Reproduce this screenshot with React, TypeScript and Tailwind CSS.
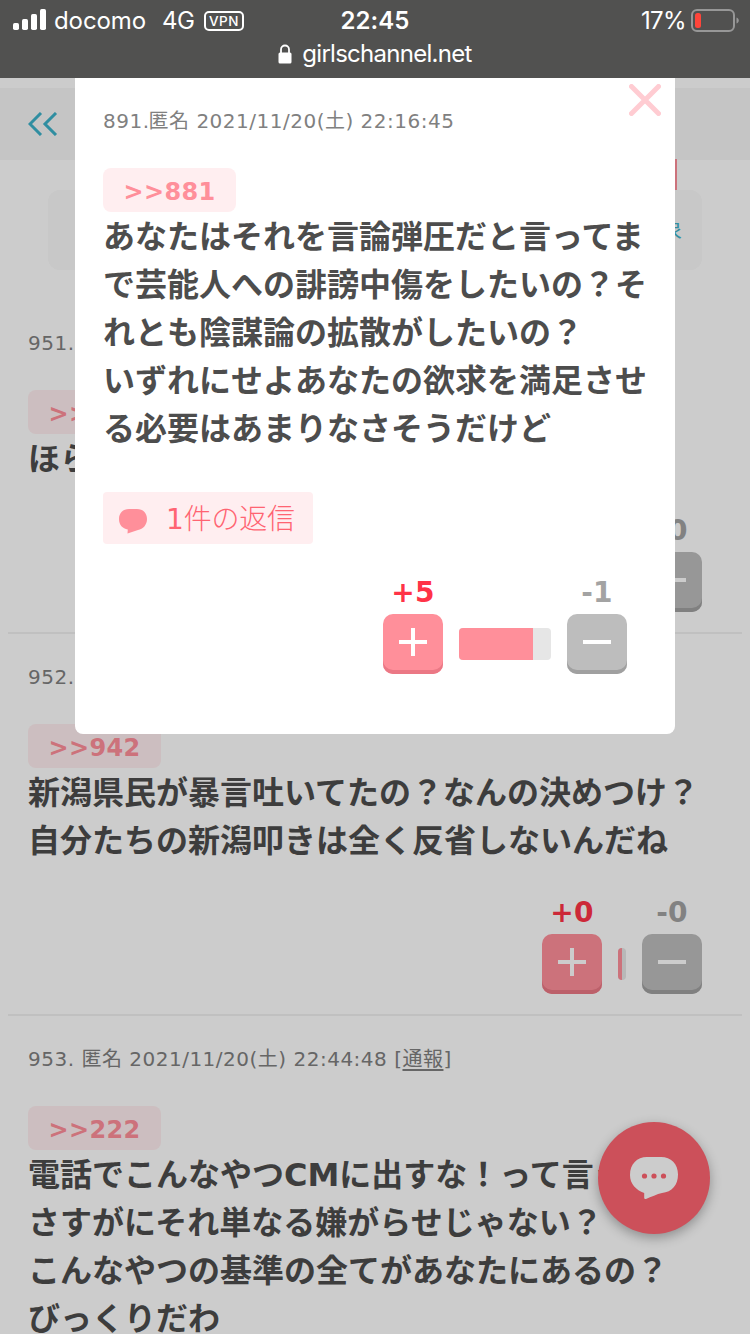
import React from 'react';

interface CommentData {
  id: number;
  meta: React.ReactNode;
  anchor: string;
  lines: string[];
  plus: string;
  minus: string;
  ratio: number;
}

const comments: CommentData[] = [
  {
    id: 951,
    meta: '951.',
    anchor: '>>942',
    lines: ['ほら'],
    plus: '+0',
    minus: '-0',
    ratio: 50,
  },
  {
    id: 952,
    meta: '952.',
    anchor: '>>942',
    lines: ['新潟県民が暴言吐いてたの？なんの決めつけ？', '自分たちの新潟叩きは全く反省しないんだね'],
    plus: '+0',
    minus: '-0',
    ratio: 50,
  },
  {
    id: 953,
    meta: (
      <>
        953. 匿名 2021/11/20(土) 22:44:48 [<span className="underline underline-offset-[3px]">通報</span>]
      </>
    ),
    anchor: '>>222',
    lines: ['電話でこんなやつCMに出すな！って言う', 'さすがにそれ単なる嫌がらせじゃない？', 'こんなやつの基準の全てがあなたにあるの？', 'びっくりだわ'],
    plus: '+0',
    minus: '-0',
    ratio: 50,
  },
];

const modalLines = [
  'あなたはそれを言論弾圧だと言ってま',
  'で芸能人への誹謗中傷をしたいの？そ',
  'れとも陰謀論の拡散がしたいの？',
  'いずれにせよあなたの欲求を満足させ',
  'る必要はあまりなさそうだけど',
];

const StatusBar: React.FC = () => (
  <header className="relative z-30 h-[78px] bg-[#515150] font-[Inter,sans-serif] text-white">
    <div className="grid h-10 grid-cols-[1fr_auto_1fr] items-center px-3 pt-px">
      <div className="flex items-center">
        <svg className="-mt-[3px]" width="34" height="22" viewBox="0 0 34 22" fill="white">
          <rect x="1" y="14" width="6" height="7" rx="1.7" />
          <rect x="10" y="10" width="6" height="11" rx="1.7" />
          <rect x="19" y="5" width="6" height="16" rx="1.7" />
          <rect x="28" y="0" width="6" height="21" rx="1.7" />
        </svg>
        <span className="ml-2 w-[90px] whitespace-nowrap text-[24px] leading-10 tracking-[-0.1px]">docomo</span>
        <span className="ml-[18px] w-8 text-[24px] leading-10 tracking-[-0.5px]">4G</span>
        <span className="ml-[10px] flex h-5 w-10 items-center justify-center rounded-[5px] border-2 border-white text-[13.5px] font-medium tracking-[0.6px]">VPN</span>
      </div>
      <span className="text-[24px] font-semibold leading-10 tracking-[0.1px]">22:45</span>
      <div className="-mr-px flex items-center justify-end">
        <span className="text-[24px] leading-10 tracking-[-0.6px]">17%</span>
        <svg className="ml-[5px] -mt-px" width="48" height="24" viewBox="0 0 48 24">
          <rect x="1" y="1" width="42" height="21" rx="5" fill="none" stroke="#979797" strokeWidth="2" />
          <rect x="4" y="4" width="6" height="15" rx="2.5" fill="#ff453a" />
          <path d="M45.5 8.5c3 1 3 5 0 6z" fill="#979797" />
        </svg>
      </div>
    </div>
    <div className="flex h-7 items-center justify-center gap-[10px]">
      <svg width="14" height="20" viewBox="0 0 14 20">
        <path d="M3 9V5.5a4 4 0 0 1 8 0V9" fill="none" stroke="white" strokeWidth="1.8" />
        <rect x="0.5" y="8.5" width="13" height="11" rx="1.5" fill="white" />
      </svg>
      <span className="text-[24px] leading-7 tracking-[-0.72px]">girlschannel.net</span>
    </div>
  </header>
);

const Anchor: React.FC<{ label: string }> = ({ label }) => (
  <div className="flex h-11 w-[133px] items-center justify-center rounded-lg bg-[#ffeef0] pt-[3px] text-[24px] font-bold tracking-[0.3px] text-[#ff8f9a]">
    {label}
  </div>
);

const Body: React.FC<{ lines: string[] }> = ({ lines }) => (
  <div className="pt-px text-[32px] font-bold leading-[48px] text-[#4d4d4d]">
    {lines.map((line) => (
      <p key={line} className="whitespace-nowrap">{line}</p>
    ))}
  </div>
);

interface VotesProps {
  plus: string;
  minus: string;
  ratio: number;
  wide?: boolean;
}

const Votes: React.FC<VotesProps> = ({ plus, minus, ratio, wide }) => (
  <div className="flex items-end justify-end gap-4">
    <div className="flex w-[60px] flex-col items-center">
      <span className="h-[39px] text-[28px] font-bold leading-9 tracking-[0.3px] text-[#ff3347]">{plus}</span>
      <button className="flex h-[60px] w-[60px] justify-center rounded-[10px] bg-[#ff8f9a] pt-[14px] shadow-[inset_0_-4px_0_#eb7885]">
        <svg width="28" height="28" viewBox="0 0 28 28" stroke="white" strokeWidth="4">
          <path d="M0 14h28M14 0v28" />
        </svg>
      </button>
    </div>
    <div className={`mb-[14px] flex h-8 overflow-hidden rounded bg-[#e6e6e6] ${wide ? 'w-[92px]' : 'w-2'}`}>
      <div className="bg-[#ff8f9a]" style={{ width: `${ratio}%` }} />
    </div>
    <div className="flex w-[60px] flex-col items-center">
      <span className="h-[39px] text-[28px] font-bold leading-9 tracking-[0.3px] text-[#a3a3a3]">{minus}</span>
      <button className="flex h-[60px] w-[60px] justify-center rounded-[10px] bg-[#bdbdbd] pt-[14px] shadow-[inset_0_-4px_0_#a0a0a0]">
        <svg width="28" height="28" viewBox="0 0 28 28" stroke="white" strokeWidth="4">
          <path d="M0 14h28" />
        </svg>
      </button>
    </div>
  </div>
);

const Comment: React.FC<{ comment: CommentData }> = ({ comment }) => (
  <article className="mx-2 border-b-2 border-[#f0f0f0] pb-5 pl-5 pr-10 pt-7">
    <p className="mb-8 whitespace-nowrap text-[20px] leading-[30px] tracking-[0.5px] text-[#808080]">{comment.meta}</p>
    <Anchor label={comment.anchor} />
    <Body lines={comment.lines} />
    <div className="mt-[30px]">
      <Votes plus={comment.plus} minus={comment.minus} ratio={comment.ratio} />
    </div>
  </article>
);

const Modal: React.FC = () => (
  <div className="absolute left-[75px] top-[78px] z-20 h-[656px] w-[600px] rounded-b-lg bg-white px-7 pt-7">
    <button className="absolute right-[14px] top-[6px]">
      <svg width="32" height="32" viewBox="0 0 32 32" stroke="#ffccd2" strokeWidth="5" strokeLinecap="round">
        <path d="M2.5 2.5l27 27M29.5 2.5l-27 27" />
      </svg>
    </button>
    <p className="mb-8 whitespace-nowrap text-[20px] leading-[30px] tracking-[0.5px] text-[#808080]">
      891.<span className="-ml-[1px]">匿名</span> 2021/11/20(土) 22:16:45
    </p>
    <Anchor label=">>881" />
    <Body lines={modalLines} />
    <button className="mt-[39px] flex h-[52px] w-[210px] items-center rounded bg-[#ffeef0] pl-4 text-[28px] text-[#ff6472]">
      <svg className="mt-[5px]" width="28" height="26" viewBox="0 0 28 26" fill="#ff8f9a">
        <path d="M10 1h8c6 0 10 4 10 10s-4 10-9 11l-10.500 3.500.300-4C3.500 20.500 0 17 0 11 0 5 4 1 10 1z" />
      </svg>
      <span className="ml-[19px] whitespace-nowrap pt-[3px] tracking-[-0.2px]">
        1<span className="font-light">件の返信</span>
      </span>
    </button>
    <div className="mt-[31px] pr-5">
      <Votes plus="+5" minus="-1" ratio={80.4} wide />
    </div>
  </div>
);

export default function App() {
  return (
    <div className="relative h-[1334px] w-[750px] overflow-hidden bg-white font-['DejaVu_Sans','Noto_Sans_CJK_JP',sans-serif]">
      <StatusBar />
      <nav className="mt-[10px] flex h-[72px] items-center bg-[#f7f7f7] pl-7">
        <svg width="30" height="24" viewBox="0 0 30 24" fill="none" stroke="#3cb2ca" strokeWidth="3">
          <path d="M13 1L2 12l11 11M28 1L17 12l11 11" />
        </svg>
      </nav>
      <div className="mx-12 -mt-px flex h-8 w-[629px] border-r-2 border-[#ff8f9a]" />
      <div className="mx-12 -mt-px mb-[30px] flex h-20 items-center justify-end rounded-xl bg-[#fafafa] pb-[2px] pr-5 text-[22px] text-[#3cb2ca]">象</div>
      {comments.map((comment) => (
        <Comment key={comment.id} comment={comment} />
      ))}

      <button className="absolute left-[598px] top-[1122px] flex h-28 w-28 items-center justify-center rounded-full bg-[#ff6471] shadow-[0_4px_12px_rgba(0,0,0,0.3)]">
        <svg width="48" height="42" viewBox="0 0 48 42">
          <path d="M17 0h14c10 0 17 7 17 17.500S42 35 32 36c-5 1-11 4-16 6-1 .3-1.800-.2-1.800-1v-5C6 33 0 27 0 18 0 7 7 0 17 0z" fill="white" />
          <g fill="#ff6471">
            <circle cx="14.500" cy="19" r="2.600" />
            <circle cx="24" cy="19" r="2.600" />
            <circle cx="33.500" cy="19" r="2.600" />
          </g>
        </svg>
      </button>
      <div className="absolute inset-0 z-10 bg-black/20" />
      <Modal />
    </div>
  );
}
